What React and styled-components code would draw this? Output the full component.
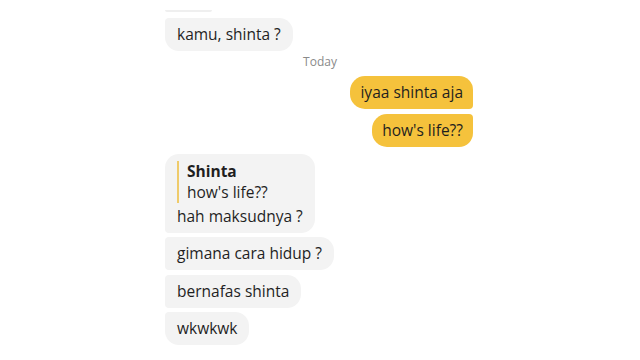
import React from "react";
import styled, { createGlobalStyle } from "styled-components";

const Global = createGlobalStyle`
  html, body { margin: 0; padding: 0; background: #ffffff; }
  body { font-family: "Open Sans", "Liberation Sans", sans-serif; }
`;

const Screen = styled.div`
  width: 640px;
  height: 360px;
  overflow: hidden;
  background: #ffffff;
`;

const Column = styled.div`
  width: 308px;
  margin: 10px 0 0 165px;
  display: flex;
  flex-direction: column;
`;

const YELLOW = "#F5C23C";
const GRAY = "#F3F3F3";

const CutEdge = styled.div`
  width: 47px;
  height: 2px;
  border-radius: 0 0 2px 2px;
  background: #efefef;
`;

const Bubble = styled.div`
  align-self: ${(p) => (p.$mine ? "flex-end" : "flex-start")};
  background: ${(p) => (p.$mine ? YELLOW : GRAY)};
  color: #1f1f1f;
  font-size: 15.5px;
  height: 33px;
  line-height: 33px;
  padding: 0 ${(p) => (p.$mine ? 10 : 12)}px;
  margin-top: ${(p) => p.$mt ?? 4}px;
  border-radius: ${(p) => p.$r || "14px"};
  white-space: nowrap;
  box-sizing: border-box;
`;

const DayLabel = styled.div`
  align-self: center;
  font-size: 12px;
  color: #8a8a8a;
  margin-top: 2px;
  height: 18px;
  line-height: 18px;
  padding-left: 2px;
`;

const ReplyBubble = styled.div`
  align-self: flex-start;
  background: ${GRAY};
  color: #1f1f1f;
  border-radius: 14px 14px 14px 4px;
  padding: 7px 14px 6px 12px;
  margin-top: 7px;
  font-size: 15.5px;
  width: 150px;
  box-sizing: border-box;
`;

const Quote = styled.div`
  border-left: 2px solid #EFCB6A;
  padding-left: 8px;
  line-height: 21px;
`;

const QuoteName = styled.div`
  font-weight: 700;
`;

const ReplyText = styled.div`
  margin-top: 2px;
  line-height: 22px;
  white-space: nowrap;
`;

export default function App() {
  return (
    <Screen>
      <Global />
      <Column>
        <CutEdge />
        <Bubble $mt={6} $r="4px 14px 14px 14px">kamu, shinta ?</Bubble>
        <DayLabel>Today</DayLabel>
        <Bubble $mine $mt={5} $r="15px 14px 4px 15px">iyaa shinta aja</Bubble>
        <Bubble $mine $mt={5} $r="15px 4px 14px 15px">how's life??</Bubble>
        <ReplyBubble>
          <Quote>
            <QuoteName>Shinta</QuoteName>
            <div>how's life??</div>
          </Quote>
          <ReplyText>hah maksudnya ?</ReplyText>
        </ReplyBubble>
        <Bubble $r="4px 14px 14px 4px">gimana cara hidup ?</Bubble>
        <Bubble $mt={5} $r="4px 14px 14px 4px">bernafas shinta</Bubble>
        <Bubble $r="4px 14px 14px 14px">wkwkwk</Bubble>
      </Column>
    </Screen>
  );
}
